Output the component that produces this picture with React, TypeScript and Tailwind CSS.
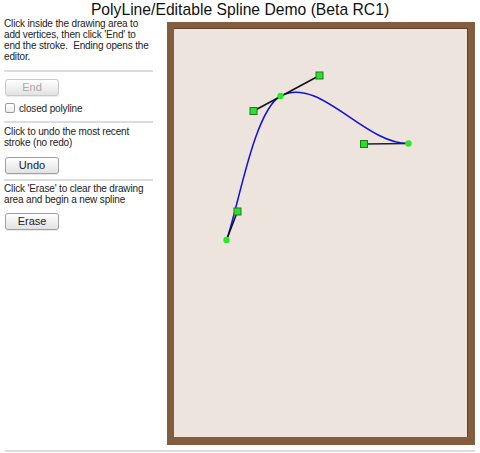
import React from 'react';

const font = { fontFamily: '"Liberation Sans", Arial, sans-serif' };

// anchors (circles) and handles (squares) of the spline, in page coordinates
const anchors = [
  [226.5, 240],
  [280.5, 96],
  [408.5, 143.5],
];
const handles = [
  [237.5, 211.5],
  [253.5, 111],
  [319.5, 75.5],
  [364, 144],
];

const Button = ({ label, disabled }: { label: string; disabled?: boolean }) => (
  <button
    disabled={disabled}
    className={
      'w-[54px] h-[17px] rounded-[3px] border bg-gradient-to-b from-white to-[#e2e2e2] text-[11px] leading-none tracking-normal shadow-[0_1px_0_rgba(0,0,0,0.08)] ' +
      (disabled ? 'text-[#a8a8a8] border-[#c8c8c8]' : 'text-[#222] border-[#a0a0a0]')
    }
  >
    {label}
  </button>
);

const Divider = () => <div className="h-[2px] bg-[#dcdcdc] w-[149px]" />;

export default function App() {
  return (
    <div className="w-[480px] h-[453px] bg-white text-[#222] overflow-hidden" style={font}>
      <h1 className="text-[15.7px] leading-[17px] pt-[1px] text-center text-[#111]">
        PolyLine/Editable Spline Demo (Beta RC1)
      </h1>

      <div className="flex">
        {/* controls */}
        <div className="w-[167px] shrink-0 pl-[4px] text-[10px] leading-[11px] tracking-[-0.15px]">
          <p className="w-[150px]">
            Click inside the drawing area to add vertices, then click 'End' to end the stroke.&nbsp; Ending opens the
            editor.
          </p>
          <div className="mt-[8px]">
            <Divider />
          </div>
          <div className="mt-[7px] pl-[1px]">
            <Button label="End" disabled />
          </div>
          <label className="flex items-center gap-[4px] mt-[7px] pl-[1px] h-[10px]">
            <span className="w-[10px] h-[10px] rounded-[2px] border border-[#999] bg-gradient-to-b from-white to-[#ececec]" />
            <span>closed polyline</span>
          </label>
          <div className="mt-[8px]">
            <Divider />
          </div>
          <p className="mt-[3px] w-[150px]">Click to undo the most recent stroke (no redo)</p>
          <div className="mt-[9px] pl-[1px]">
            <Button label="Undo" />
          </div>
          <div className="mt-[5px]">
            <Divider />
          </div>
          <p className="mt-[2px] w-[150px]">Click 'Erase' to clear the drawing area and begin a new spline</p>
          <div className="mt-[8px] pl-[1px]">
            <Button label="Erase" />
          </div>
        </div>

        {/* drawing area */}
        <div className="mt-[4px] w-[308px] h-[423px] shrink-0 bg-[#845c3e] pl-[7px] pr-[7px] pt-[6px] pb-[8px]">
          <div className="w-full h-full bg-[#ede4de] border-t border-r border-[#5e3f2a]">
            <svg viewBox="174 29 293 408" className="w-full h-full block">
              <path
                d={`M ${anchors[0].join(' ')} C ${handles[0].join(' ')} ${handles[1].join(' ')} ${anchors[1].join(
                  ' '
                )} C ${handles[2].join(' ')} ${handles[3].join(' ')} ${anchors[2].join(' ')}`}
                fill="none"
                stroke="#1010e0"
                strokeWidth={1.5}
              />
              <line x1={anchors[0][0]} y1={anchors[0][1]} x2={handles[0][0]} y2={handles[0][1]} stroke="#111" strokeWidth={1.5} />
              <line x1={handles[1][0]} y1={handles[1][1]} x2={handles[2][0]} y2={handles[2][1]} stroke="#111" strokeWidth={1.5} />
              <line x1={handles[3][0]} y1={handles[3][1]} x2={anchors[2][0]} y2={anchors[2][1]} stroke="#222" strokeWidth={1.5} />
              {handles.map(([x, y], i) => (
                <rect key={i} x={x - 3.5} y={y - 3.5} width={7} height={7} fill="#2ee02e" stroke="#1d7a1d" strokeWidth={1} />
              ))}
              {anchors.map(([x, y], i) => (
                <circle key={i} cx={x} cy={y} r={3.2} fill="#22ee22" />
              ))}
            </svg>
          </div>
        </div>
      </div>

      <div className="mx-[5px] mt-[5px] h-[2px] bg-[#dcdcdc]" />
    </div>
  );
}
